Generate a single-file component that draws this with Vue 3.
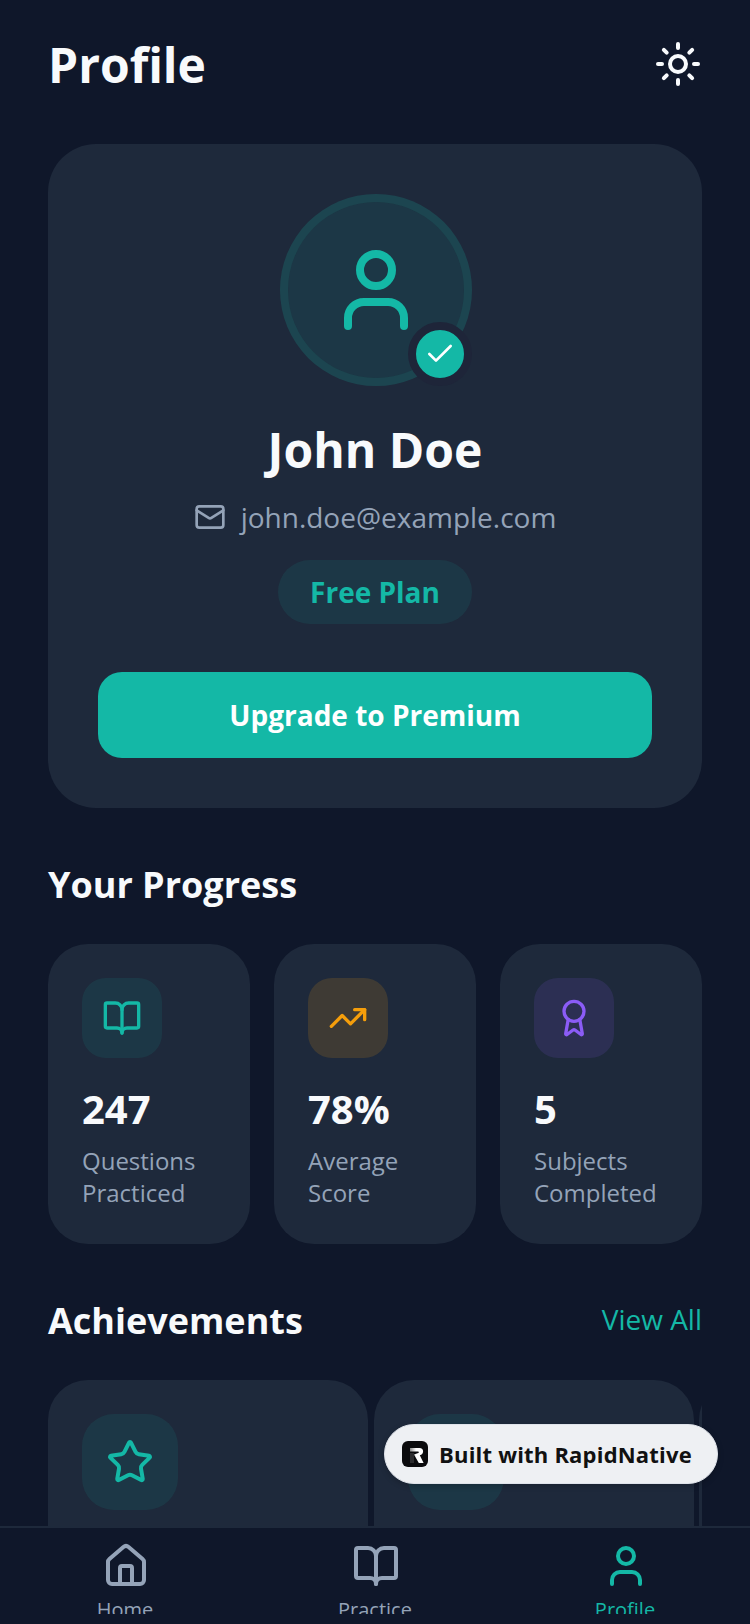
<template>
  <div class="screen">
    <div class="scroll">
      <header class="top">
        <h1 class="page-title">Profile</h1>
        <svg class="sun" viewBox="0 0 24 24">
          <path v-for="d in icons.sun" :key="d" :d="d" />
        </svg>
      </header>

      <section class="profile-card">
        <div class="avatar">
          <svg class="avatar-icon" viewBox="0 0 24 24">
            <path v-for="d in icons.user" :key="d" :d="d" />
          </svg>
          <div class="verified">
            <svg class="verified-icon" viewBox="0 0 24 24">
              <path d="M20 6 9 17l-5-5" />
            </svg>
          </div>
        </div>
        <h2 class="name">John Doe</h2>
        <div class="email">
          <svg class="mail-icon" viewBox="0 0 24 24">
            <path v-for="d in icons.mail" :key="d" :d="d" />
          </svg>
          <span>john.doe@example.com</span>
        </div>
        <div class="plan">Free Plan</div>
        <button class="upgrade">Upgrade to Premium</button>
      </section>

      <h3 class="section-title progress-title">Your Progress</h3>
      <div class="stats">
        <div v-for="s in stats" :key="s.value" class="stat">
          <div class="stat-icon" :class="s.tone">
            <svg viewBox="0 0 24 24">
              <path v-for="d in icons[s.icon]" :key="d" :d="d" />
            </svg>
          </div>
          <div class="stat-value">{{ s.value }}</div>
          <div class="stat-label">{{ s.label }}</div>
        </div>
      </div>

      <div class="section-row">
        <h3 class="section-title">Achievements</h3>
        <span class="view-all">View All</span>
      </div>
      <div class="achievements">
        <div v-for="n in 3" :key="n" class="achievement">
          <div class="achievement-icon">
            <svg viewBox="0 0 24 24">
              <path :d="icons.star[0]" />
            </svg>
          </div>
        </div>
      </div>
    </div>

    <nav class="tabs">
      <div v-for="t in tabs" :key="t.label" class="tab" :class="{ active: t.active }">
        <svg viewBox="0 0 24 24">
          <path v-for="d in icons[t.icon]" :key="d" :d="d" />
        </svg>
        <span class="tab-label">{{ t.label }}</span>
      </div>
    </nav>

    <div class="built">
      <svg class="built-logo" viewBox="0 0 26 26">
        <defs>
          <linearGradient id="logoFade" x1="0" y1="0" x2="1" y2="0">
            <stop offset="0" stop-color="#8a8a8a" />
            <stop offset="0.45" stop-color="#ffffff" />
          </linearGradient>
        </defs>
        <rect width="26" height="26" rx="6" fill="#0b0b0d" />
        <path d="M8 12h4v10H8z" fill="#2c2c2e" />
        <path d="M8 7h9.5a3.6 3.6 0 0 1 3.6 3.6c0 2-1.3 3.2-3.3 3.7l3.8 7.700h-4.800l-4.800-8.500 4.300-1.600c.9-.4.7-1.500-.3-1.500H8z" fill="url(#logoFade)" />
      </svg>
      <span>Built with RapidNative</span>
    </div>
  </div>
</template>

<script setup>
const icons = {
  sun: [
    'M8 12a4 4 0 1 0 8 0a4 4 0 1 0-8 0',
    'M12 2v2', 'M12 20v2', 'm4.93 4.93 1.41 1.41', 'm17.66 17.66 1.41 1.41',
    'M2 12h2', 'M20 12h2', 'm6.34 17.66-1.41 1.41', 'm19.07 4.93-1.41 1.41',
  ],
  user: [
    'M19 21v-2a4 4 0 0 0-4-4H9a4 4 0 0 0-4 4v2',
    'M8 7a4 4 0 1 0 8 0a4 4 0 1 0-8 0',
  ],
  mail: [
    'M4 4h16a2 2 0 0 1 2 2v12a2 2 0 0 1-2 2H4a2 2 0 0 1-2-2V6a2 2 0 0 1 2-2z',
    'm22 7-8.97 5.7a1.94 1.94 0 0 1-2.06 0L2 7',
  ],
  book: [
    'M12 7v14',
    'M3 18a1 1 0 0 1-1-1V4a1 1 0 0 1 1-1h5a4 4 0 0 1 4 4 4 4 0 0 1 4-4h5a1 1 0 0 1 1 1v13a1 1 0 0 1-1 1h-6a3 3 0 0 0-3 3 3 3 0 0 0-3-3z',
  ],
  trend: ['M16 7h6v6', 'm22 7-8.5 8.5-5-5L2 17'],
  award: [
    'm15.477 12.89 1.515 8.526a.5.5 0 0 1-.81.47l-3.58-2.687a1 1 0 0 0-1.197 0l-3.586 2.686a.5.5 0 0 1-.81-.469l1.514-8.526',
    'M6 8a6 6 0 1 0 12 0a6 6 0 1 0-12 0',
  ],
  star: [
    'M11.525 2.295a.53.53 0 0 1 .95 0l2.31 4.679a2.123 2.123 0 0 0 1.595 1.16l5.166.756a.53.53 0 0 1 .294.904l-3.736 3.638a2.123 2.123 0 0 0-.611 1.878l.882 5.14a.53.53 0 0 1-.771.56l-4.618-2.428a2.122 2.122 0 0 0-1.973 0L6.396 21.01a.53.53 0 0 1-.77-.56l.881-5.139a2.122 2.122 0 0 0-.611-1.879L2.16 9.795a.53.53 0 0 1 .294-.906l5.165-.755a2.122 2.122 0 0 0 1.597-1.16z',
  ],
  home: [
    'M15 21v-8a1 1 0 0 0-1-1h-4a1 1 0 0 0-1 1v8',
    'M3 10a2 2 0 0 1 .709-1.528l7-5.999a2 2 0 0 1 2.582 0l7 5.999A2 2 0 0 1 21 10v9a2 2 0 0 1-2 2H5a2 2 0 0 1-2-2z',
  ],
}

const stats = [
  { icon: 'book', tone: 'teal', value: '247', label: 'Questions Practiced' },
  { icon: 'trend', tone: 'amber', value: '78%', label: 'Average Score' },
  { icon: 'award', tone: 'violet', value: '5', label: 'Subjects Completed' },
]

const tabs = [
  { icon: 'home', label: 'Home' },
  { icon: 'book', label: 'Practice' },
  { icon: 'user', label: 'Profile', active: true },
]
</script>

<style>
html, body {
  margin: 0;
  background: #0f172a;
}
</style>

<style scoped>
* {
  box-sizing: border-box;
}

svg {
  display: block;
  fill: none;
  stroke: currentColor;
  stroke-linecap: round;
  stroke-linejoin: round;
  stroke-width: 2;
}

.screen {
  position: relative;
  width: 750px;
  height: 1624px;
  display: flex;
  flex-direction: column;
  overflow: hidden;
  background: #0f172a;
  color: #f8fafc;
  font-family: "Open Sans", "Liberation Sans", sans-serif;
}

.scroll {
  flex: 1;
  min-height: 0;
  overflow: hidden;
  padding: 32px 48px 0;
}

.top {
  display: flex;
  align-items: center;
  justify-content: space-between;
  height: 64px;
  margin-bottom: 48px;
}

.page-title {
  margin: 0;
  font-size: 48px;
  font-weight: 700;
}

.sun {
  width: 48px;
  height: 48px;
  color: #f8fafc;
}

.profile-card {
  display: flex;
  flex-direction: column;
  align-items: center;
  padding: 50px;
  background: #1e293b;
  border-radius: 48px;
}

.avatar {
  position: relative;
  width: 192px;
  height: 192px;
  margin-left: 2px;
  display: flex;
  align-items: center;
  justify-content: center;
  border: 8px solid rgba(20, 184, 166, 0.2);
  border-radius: 50%;
  background: rgba(20, 184, 166, 0.1);
  background-clip: padding-box;
}

.avatar-icon {
  width: 96px;
  height: 96px;
  color: #14b8a6;
}

.verified {
  position: absolute;
  right: -8px;
  bottom: -8px;
  width: 64px;
  height: 64px;
  display: flex;
  align-items: center;
  justify-content: center;
  border: 8px solid #1e2539;
  border-radius: 50%;
  background: #14b8a6;
}

.verified-icon {
  width: 32px;
  height: 32px;
  color: #fff;
}

.name {
  margin: 31px 0 16px;
  font-size: 48px;
  font-weight: 700;
}

.email {
  display: flex;
  align-items: center;
  gap: 15px;
  font-size: 28px;
  color: #94a3b8;
}

.mail-icon {
  width: 32px;
  height: 32px;
}

.plan {
  margin: 24px 0 48px;
  padding: 13px 32px;
  border-radius: 32px;
  background: rgba(20, 184, 166, 0.1);
  color: #14b8a6;
  font-size: 28px;
  font-weight: 700;
}

.upgrade {
  width: 100%;
  padding: 24px;
  border: none;
  border-radius: 24px;
  background: #14b8a6;
  color: #fff;
  font-family: inherit;
  font-size: 28px;
  font-weight: 700;
}

.section-title {
  margin: 0;
  font-size: 36px;
  font-weight: 700;
}

.progress-title {
  margin: 52px 0 35px;
}

.stats {
  display: flex;
  gap: 24px;
}

.stat {
  flex: 1;
  min-width: 0;
  padding: 34px 34px 35px;
  background: #1e293b;
  border-radius: 40px;
}

.stat-icon {
  width: 80px;
  height: 80px;
  display: flex;
  align-items: center;
  justify-content: center;
  border-radius: 24px;
  margin-bottom: 23px;
}

.stat-icon svg {
  width: 40px;
  height: 40px;
}

.teal {
  background: rgba(20, 184, 166, 0.1);
  color: #14b8a6;
}

.amber {
  background: rgba(245, 158, 11, 0.15);
  color: #f59e0b;
}

.violet {
  background: rgba(139, 92, 246, 0.13);
  color: #8b5cf6;
}

.stat-value {
  font-size: 40px;
  font-weight: 700;
  margin-bottom: 9px;
}

.stat-label {
  font-size: 24px;
  line-height: 32px;
  color: #94a3b8;
}

.section-row {
  display: flex;
  align-items: center;
  justify-content: space-between;
  margin: 52px 0 35px;
}

.view-all {
  margin-bottom: 4px;
  font-size: 28px;
  color: #14b8a6;
}

.achievements {
  display: flex;
  gap: 5.5px;
  overflow: hidden;
}

.achievement {
  flex: 0 0 320px;
  height: 300px;
  padding: 34px;
  background: #1e293b;
  border-radius: 40px;
}

.achievement-icon {
  width: 96px;
  height: 96px;
  display: flex;
  align-items: center;
  justify-content: center;
  border-radius: 32px;
  background: rgba(20, 184, 166, 0.1);
  color: #14b8a6;
}

.achievement-icon svg {
  width: 48px;
  height: 48px;
}

.tabs {
  display: flex;
  flex: 0 0 98px;
  border-top: 2px solid #1e293b;
  background: #0f172a;
}

.tab {
  flex: 1;
  display: flex;
  flex-direction: column;
  align-items: center;
  height: 86px;
  padding-top: 14px;
  overflow: hidden;
  color: #94a3b8;
}

.tab.active {
  color: #14b8a6;
}

.tab svg {
  flex: none;
  width: 48px;
  height: 48px;
  margin-left: 2px;
}

.tab-label {
  flex: none;
  margin-top: 6px;
  font-size: 20px;
}

.built {
  position: absolute;
  left: 384px;
  top: 1424px;
  width: 334px;
  height: 60px;
  display: flex;
  align-items: center;
  gap: 11px;
  padding-left: 17px;
  border: 1px solid #dfe3ea;
  border-radius: 30px;
  background: #eef0f3;
  box-shadow: 0 2px 6px rgba(0, 0, 0, 0.2);
  color: #111;
  font-size: 22px;
  font-weight: 700;
  letter-spacing: 0.2px;
}

.built-logo {
  flex: none;
  width: 26px;
  height: 26px;
  stroke: none;
}
</style>
